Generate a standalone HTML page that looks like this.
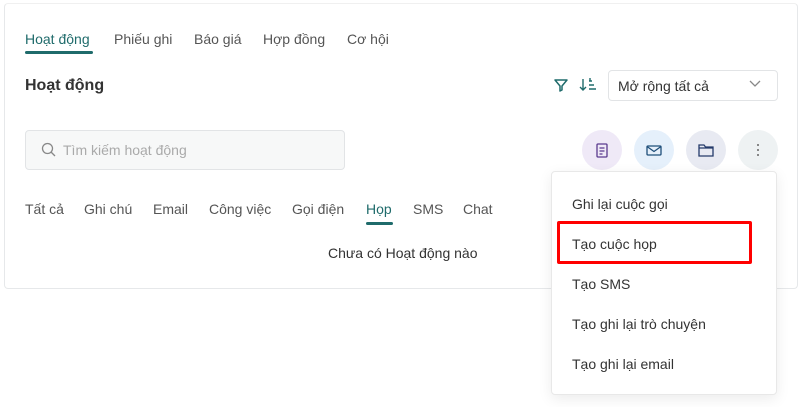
<!DOCTYPE html>
<html><head><meta charset="utf-8"><style>
*{box-sizing:border-box;margin:0;padding:0}
body{width:808px;height:407px;background:#fff;font-family:"Liberation Sans","Noto Sans CJK SC",sans-serif;position:relative;overflow:hidden;color:#333}
.card{position:absolute;left:4px;top:3px;width:794px;height:286px;border:1px solid #e6e8ea;border-radius:4px;border-top-color:#f0f0f0}
.t{position:absolute;font-size:14px;white-space:nowrap}
.tab{color:#555;top:31px}
.act{color:#1f6b6b}
.ul{position:absolute;height:3px;background:#1f6b6b;border-radius:2px}
.search{position:absolute;left:25px;top:130px;width:320px;height:40px;border:1px solid #e2e4e6;border-radius:4px;background:#f7f8f8}
.sel{position:absolute;left:608px;top:70px;width:170px;height:31px;border:1px solid #e2e4e6;border-radius:4px}
.c{position:absolute;top:130px;width:40px;height:40px;border-radius:50%}
.menu{position:absolute;left:551px;top:171px;width:226px;height:224px;background:#fff;border:1px solid #e8e8e8;border-radius:4px;box-shadow:0 4px 14px rgba(0,0,0,.08)}
.mi{position:absolute;left:20px;font-size:14px;color:#333}
</style></head><body>
<div class="card"></div>
<span class="t tab act" style="left:25px">Hoạt động</span>
<div class="ul" style="left:25px;top:51px;width:68px"></div>
<span class="t tab" style="left:114px">Phiếu ghi</span>
<span class="t tab" style="left:194px">Báo giá</span>
<span class="t tab" style="left:263px">Hợp đồng</span>
<span class="t tab" style="left:347px">Cơ hội</span>
<span class="t" style="left:25px;top:77px;font-size:16px;font-weight:bold;color:#333">Hoạt động</span>
<svg style="position:absolute;left:553px;top:77px" width="16" height="16" viewBox="0 0 16 16"><path d="M2 3h12l-5 6v4l-2 1V9z" fill="none" stroke="#1f6b6b" stroke-width="1.5" stroke-linejoin="round"/></svg>
<svg style="position:absolute;left:579px;top:77px" width="18" height="16" viewBox="0 0 18 16"><path d="M4 2v11M1 10l3 3 3-3M10 4h3M10 8h5M10 12h7M11 1v3" fill="none" stroke="#1f6b6b" stroke-width="1.4"/></svg>
<div class="sel"></div>
<span class="t" style="left:618px;top:78px;color:#333">Mở rộng tất cả</span>
<svg style="position:absolute;left:749px;top:80px" width="12" height="8" viewBox="0 0 12 8"><path d="M1 1l5 5 5-5" fill="none" stroke="#888" stroke-width="1.3"/></svg>
<div class="search"></div>
<svg style="position:absolute;left:41px;top:142px" width="16" height="16" viewBox="0 0 16 16"><circle cx="6.5" cy="6.5" r="5" fill="none" stroke="#888" stroke-width="1.3"/><path d="M10 10l4 4" stroke="#888" stroke-width="1.3"/></svg>
<span class="t" style="left:63px;top:142px;color:#aaa">Tìm kiếm hoạt động</span>
<div class="c" style="left:582px;background:#efe9f7"></div>
<svg style="position:absolute;left:596px;top:143px" width="12" height="15" viewBox="0 0 12 15"><rect x="1" y="1" width="10" height="13" rx="1" fill="none" stroke="#5a3a8e" stroke-width="1.3"/><path d="M3.5 5h5M3.5 8h5M3.5 11h3" stroke="#5a3a8e" stroke-width="1.2"/></svg>
<div class="c" style="left:634px;background:#e5f0fb"></div>
<svg style="position:absolute;left:646px;top:145px" width="16" height="11" viewBox="0 0 16 11"><rect x="1" y="1" width="14" height="9" rx="1" fill="none" stroke="#1f4f7a" stroke-width="1.3"/><path d="M1 1.5l7 5 7-5" fill="none" stroke="#1f4f7a" stroke-width="1.3"/></svg>
<div class="c" style="left:686px;background:#e8eaf2"></div>
<svg style="position:absolute;left:698px;top:143px" width="16" height="14" viewBox="0 0 16 14"><path d="M1 2h5l1.5 2H15v9H1z M1 5h14" fill="none" stroke="#243a6a" stroke-width="1.3"/></svg>
<div class="c" style="left:738px;background:#eef2f3"></div>
<svg style="position:absolute;left:756px;top:142px" width="4" height="16" viewBox="0 0 4 16"><circle cx="2" cy="3" r="1" fill="#666"/><circle cx="2" cy="8" r="1" fill="#666"/><circle cx="2" cy="13" r="1" fill="#666"/></svg>
<span class="t" style="left:25px;top:201px;color:#555">Tất cả</span>
<span class="t" style="left:84px;top:201px;color:#555">Ghi chú</span>
<span class="t" style="left:153px;top:201px;color:#555">Email</span>
<span class="t" style="left:209px;top:201px;color:#555">Công việc</span>
<span class="t" style="left:292px;top:201px;color:#555">Gọi điện</span>
<span class="t act" style="left:366px;top:201px">Họp</span>
<div class="ul" style="left:366px;top:222px;width:27px"></div>
<span class="t" style="left:413px;top:201px;color:#555">SMS</span>
<span class="t" style="left:463px;top:201px;color:#555">Chat</span>
<span class="t" style="left:328px;top:245px;color:#333">Chưa có Hoạt động nào</span>
<div class="menu">
<span class="mi" style="top:24px">Ghi lại cuộc gọi</span>
<span class="mi" style="top:64px">Tạo cuộc họp</span>
<span class="mi" style="top:104px">Tạo SMS</span>
<span class="mi" style="top:144px">Tạo ghi lại trò chuyện</span>
<span class="mi" style="top:184px">Tạo ghi lại email</span>
</div>
<div style="position:absolute;left:557px;top:221px;width:195px;height:43px;border:3px solid #f00;border-radius:2px"></div>
</body></html>
